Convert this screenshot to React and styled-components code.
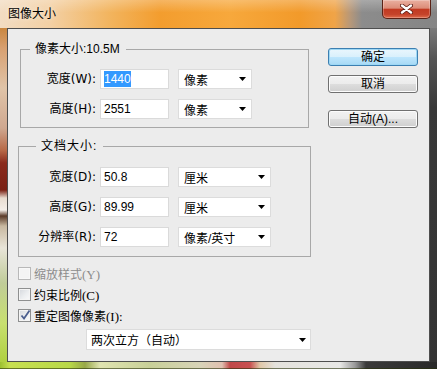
import React from 'react';
import styled, { createGlobalStyle } from 'styled-components';

const Global = createGlobalStyle`
  html, body { margin: 0; padding: 0; background: #ececec; }
  body {
    width: 437px; height: 369px; overflow: hidden;
    font-family: "Liberation Sans", "Noto Sans CJK SC", sans-serif;
    font-size: 12px; color: #000;
  }
`;

const Window = styled.div`
  width: 437px;
  height: 369px;
  display: grid;
  grid-template-columns: 7px 1fr 7px;
  grid-template-rows: 28px 1fr 7px;
`;

const TitleBar = styled.div`
  grid-column: 1 / -1;
  display: flex;
  justify-content: space-between;
  align-items: flex-start;
  background:
    linear-gradient(to bottom, rgba(255,255,255,0.25), rgba(255,255,255,0) 45%),
    linear-gradient(to right, #f2dcc2 0px, #f3d0a4 50px, #f2b45e 110px, #f39d2e 160px,
      #f7a83c 230px, #f29a2a 300px, #f0a448 335px, #b89878 350px, #8c8c8c 362px, #858585 100%);
`;

const Title = styled.div`
  padding: 7px 0 0 8px;
  line-height: 14px;
  font-size: 12px;
  text-shadow: 0 0 5px rgba(255,255,255,0.8);
`;

const CloseButton = styled.div`
  width: 49px;
  height: 19px;
  margin-right: 6px;
  box-sizing: border-box;
  border: 1px solid #5a2216;
  border-top: none;
  border-radius: 0 0 5px 5px;
  background: linear-gradient(to bottom, #eab0a0 0%, #dc8c78 45%, #c23a22 52%, #c5432a 80%, #df6c4c 100%);
  box-shadow: inset 0 0 0 1px rgba(255,255,255,0.25);
  display: flex;
  align-items: center;
  justify-content: center;
`;

const LeftEdge = styled.div`
  background: linear-gradient(to bottom, #c9863f 0px, #d8a070 20px, #e0c4a8 60px, #cfa890 100px,
    #b86a48 122px, #8a2a1c 135px, #7a2014 162px, #e8dcd0 170px, #f4eee8 182px, #5a3a28 188px,
    #c8b8a0 198px, #e8e4d8 220px, #c0cc98 255px, #c8e070 295px, #b0d040 334px);
`;

const RightEdge = styled.div`
  background: linear-gradient(to bottom, #7a7a7a 0px, #555 30px, #383838 80px, #333 100%);
`;

const BottomEdge = styled.div`
  grid-column: 1 / -1;
  box-shadow: inset 0 -1px 0 rgba(40,50,10,0.6);
  background: linear-gradient(to right, #9cc030 0, #c8e050 10px, #b8d848 70px, #98a848 85px,
    #e0e4b0 100px, #c8d098 150px, #d8d4b8 200px, #e0c0b0 222px, #c04848 230px, #c85050 250px,
    #e0c8a8 260px, #e4e2dc 275px, #e8e8e6 340px, #9a9a9a 355px, #3a3a3a 366px, #2a2a2a 100%);
`;

const Client = styled.div`
  background: #ececec;
  border: 1px solid #4e4e4e;
  display: flex;
  align-items: flex-start;
`;

const LeftCol = styled.div`
  display: flex;
  flex-direction: column;
  padding: 13px 0 0 10px;
  width: 293px;
`;

const Group = styled.fieldset`
  margin: ${p => p.$top}px 0 0 ${p => p.$left}px;
  width: ${p => p.$width}px;
  box-sizing: border-box;
  min-inline-size: 0;
  border: 1px solid #a8a8a8;
  padding: ${p => p.$padTop}px 0 ${p => p.$padBottom}px 0;
`;

const Legend = styled.legend`
  margin-left: ${p => p.$left}px;
  padding: 0 6px 0 5px;
  line-height: 14px;
  font-size: 12px;
  letter-spacing: ${p => p.$spacing || 0}px;
`;

const Rows = styled.div`
  display: flex;
  flex-direction: column;
  gap: 10px;
`;

const FieldRow = styled.div`
  display: flex;
  align-items: center;
  height: 20px;
`;

const Label = styled.div`
  width: ${p => p.$width}px;
  margin-right: 4px;
  text-align: right;
  white-space: nowrap;
  line-height: 20px;
  font-family: "DejaVu Sans", "Noto Sans CJK SC", sans-serif;
`;

const Field = styled.div`
  width: 69px;
  height: 20px;
  box-sizing: border-box;
  border: 1px solid #dadada;
  background: #fff;
  padding-left: 3px;
  display: flex;
  align-items: center;
  line-height: 16px;
`;

const Selected = styled.span`
  background: #3399ff;
  color: #fff;
  line-height: 16px;
`;

const Select = styled.div`
  margin-left: ${p => p.$left ?? 9}px;
  margin-top: ${p => p.$top || 0}px;
  width: ${p => p.$width}px;
  height: ${p => p.$height || 20}px;
  box-sizing: border-box;
  border: 1px solid #dcdcdc;
  background: #fff;
  display: flex;
  align-items: center;
  justify-content: space-between;
  padding: 0 ${p => p.$padRight || 5}px 0 ${p => p.$padLeft || 5}px;
  white-space: nowrap;
`;

const Arrow = () => (
  <svg width="7" height="4" viewBox="0 0 7 4">
    <polygon points="0,0 7,0 3.5,4" fill="#000" />
  </svg>
);

const CheckList = styled.div`
  margin-top: 6px;
  display: flex;
  flex-direction: column;
`;

const CheckRow = styled.div`
  height: 21px;
  display: flex;
  align-items: center;
  gap: 3px;
  font-family: "Liberation Serif", "Noto Sans CJK SC", serif;
  font-size: 12px;
  color: ${p => (p.$disabled ? '#8d8d8d' : '#000')};
`;

const AccessKey = styled.span`
  font-size: 13px;
`;

const Box = styled.div`
  width: 13px;
  height: 13px;
  box-sizing: border-box;
  border: 1px solid ${p => (p.$disabled ? '#b8b8b8' : '#8e8f8f')};
  background: ${p => (p.$disabled
    ? '#f4f4f4'
    : 'linear-gradient(135deg, #d4d7dc 0%, #eceef0 55%, #fafafa 100%)')};
  box-shadow: inset 0 0 0 1px ${p => (p.$disabled ? '#f8f8f8' : '#f4f4f4')};
  position: relative;
`;

const CheckMark = styled.svg`
  position: absolute;
  left: 1px;
  top: -1px;
`;

const CheckBox = ({ checked, disabled }) => (
  <Box $disabled={disabled}>
    {checked && (
      <CheckMark width="11" height="12" viewBox="0 0 11 12">
        <path d="M1.5 6.5 L4 9.5 L9.5 1.5" stroke="#4a5e8e" strokeWidth="1.8" fill="none" />
      </CheckMark>
    )}
  </Box>
);

const ButtonCol = styled.div`
  margin-left: 17px;
  padding-top: 19px;
  display: flex;
  flex-direction: column;
`;

const Button = styled.div`
  width: 90px;
  height: 18px;
  box-sizing: border-box;
  margin-top: ${p => p.$top || 0}px;
  border: 1px solid ${p => (p.$primary ? '#3c7fb1' : '#707070')};
  border-radius: 3px;
  background: ${p => (p.$primary
    ? 'linear-gradient(to bottom, #eaf6fd 0%, #d9f0fc 50%, #bee6fd 51%, #a7d9f5 100%)'
    : 'linear-gradient(to bottom, #f2f2f2 0%, #ebebeb 50%, #dddddd 51%, #cfcfcf 100%)')};
  box-shadow: inset 0 0 0 1px ${p => (p.$primary ? '#9ed8f5' : '#fcfcfc')};
  display: flex;
  align-items: center;
  justify-content: center;
  line-height: 16px;
  font-size: 12px;
`;

const rows1 = [
  { label: '宽度(W):', value: '1440', selected: true, unit: '像素' },
  { label: '高度(H):', value: '2551', unit: '像素' },
];

const rows2 = [
  { label: '宽度(D):', value: '50.8', unit: '厘米' },
  { label: '高度(G):', value: '89.99', unit: '厘米' },
  { label: '分辨率(R):', value: '72', unit: '像素/英寸' },
];

const checks = [
  { text: '缩放样式', key: '(Y)', disabled: true },
  { text: '约束比例', key: '(C)' },
  { text: '重定图像像素', key: '(I):', checked: true },
];

export default function App() {
  return (
    <>
      <Global />
      <Window>
        <TitleBar>
          <Title>图像大小</Title>
          <CloseButton>
            <svg width="13" height="10" viewBox="0 0 13 10">
              <path d="M2 1.5 L11 8.5 M11 1.5 L2 8.5" stroke="#5a1a10" strokeWidth="4" strokeLinecap="round" />
              <path d="M2 1.5 L11 8.5 M11 1.5 L2 8.5" stroke="#fff" strokeWidth="2.4" strokeLinecap="round" />
            </svg>
          </CloseButton>
        </TitleBar>
        <LeftEdge />
        <Client>
          <LeftCol>
            <Group $top={0} $left={2} $width={289} $padTop={13} $padBottom={8}>
              <Legend $left={9}>像素大小:10.5M</Legend>
              <Rows>
                {rows1.map(r => (
                  <FieldRow key={r.label}>
                    <Label $width={75}>{r.label}</Label>
                    <Field>{r.selected ? <Selected>{r.value}</Selected> : r.value}</Field>
                    <Select $width={74}>
                      <span>{r.unit}</span>
                      <Arrow />
                    </Select>
                  </FieldRow>
                ))}
              </Rows>
            </Group>
            <Group $top={11} $left={0} $width={293} $padTop={14} $padBottom={9}>
              <Legend $left={17} $spacing={1}>文档大小:</Legend>
              <Rows>
                {rows2.map(r => (
                  <FieldRow key={r.label}>
                    <Label $width={77}>{r.label}</Label>
                    <Field>{r.value}</Field>
                    <Select $width={93}>
                      <span>{r.unit}</span>
                      <Arrow />
                    </Select>
                  </FieldRow>
                ))}
              </Rows>
            </Group>
            <CheckList>
              {checks.map(c => (
                <CheckRow key={c.text} $disabled={c.disabled}>
                  <CheckBox disabled={c.disabled} checked={c.checked} />
                  <span>{c.text}<AccessKey>{c.key}</AccessKey></span>
                </CheckRow>
              ))}
            </CheckList>
            <Select $left={68} $top={3} $width={225} $height={21} $padLeft={4} $padRight={4}>
              <span>两次立方（自动）</span>
              <Arrow />
            </Select>
          </LeftCol>
          <ButtonCol>
            <Button $primary>确定</Button>
            <Button $top={9}>取消</Button>
            <Button $top={17}>自动(A)...</Button>
          </ButtonCol>
        </Client>
        <RightEdge />
        <BottomEdge />
      </Window>
    </>
  );
}
